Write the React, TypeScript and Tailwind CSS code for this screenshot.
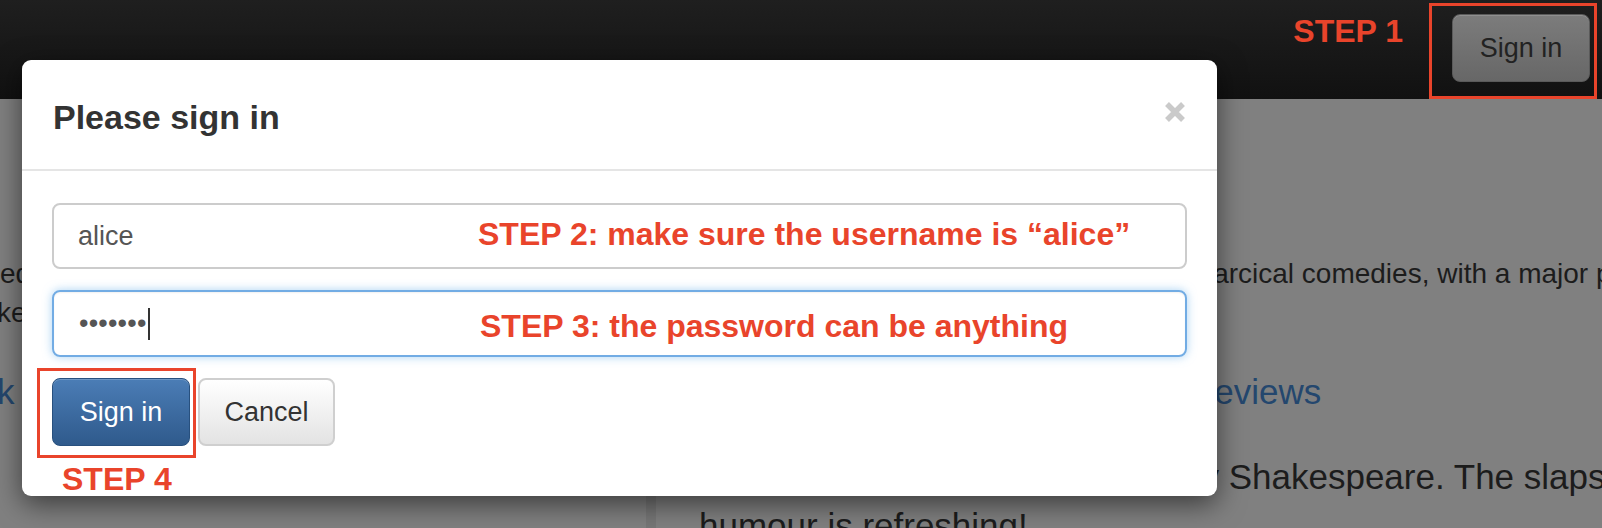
import React from "react";

const font = { fontFamily: '"Liberation Sans", Arial, Helvetica, sans-serif' };

function CloseIcon() {
  return (
    <svg width="22" height="22" viewBox="0 0 22 22" className="text-[#cacaca]">
      <path d="M3 3 L19 19 M19 3 L3 19" stroke="currentColor" strokeWidth="5.5" />
    </svg>
  );
}

function Navbar() {
  return (
    <div className="h-[99px] flex items-start justify-end pr-[5px] bg-gradient-to-b from-[#1f1f1f] to-[#111111]">
      <span className="mt-[15px] mr-[26px] text-[32px] leading-none font-bold text-[#e9442b]">
        STEP 1
      </span>
      <div className="mt-[3px] w-[168px] h-[96px] border-[3px] border-[#e9442b] pl-[20px] pt-[8px]">
        <button className="w-[138px] h-[68px] rounded-[8px] border border-[#5a5a5a] bg-gradient-to-b from-[#7c7c7c] to-[#676767] text-[27px] text-[#222] shadow-[inset_0_1px_0_rgba(255,255,255,0.15)]">
          Sign in
        </button>
      </div>
    </div>
  );
}

function PageBehind() {
  return (
    <div className="flex h-[429px] bg-[#808080] text-[#1c1c1c] overflow-hidden">
      {/* left column, mostly hidden by the modal */}
      <div className="w-[646px] shrink-0 overflow-hidden">
        <div className="pt-[155px] text-[28px] leading-[39px] whitespace-nowrap">
          <p>ed on the streets of Ephesus, a merchant is arrested</p>
          <p className="-ml-[3px]">ke for his long lost twin brother</p>
        </div>
        <h3 className="mt-[40px] -ml-[3px] text-[35px] leading-[40px] text-[#24476e] whitespace-nowrap">
          k tickets
        </h3>
      </div>
      {/* right column */}
      <div className="flex-1 min-w-0">
        <p className="pt-[155px] pl-[24px] text-[28px] leading-[39px] whitespace-nowrap">
          plays. It is his shortest and one of his most farcical comedies, with a major part of the humour
        </p>
        <h3 className="mt-[40px] pt-[39px] ml-[543px] text-[35px] leading-[40px] text-[#24476e] whitespace-nowrap">
          Reviews
        </h3>
        <blockquote className="mt-[40px] border-l-[10px] border-[#777777] pl-[43px] text-[35px] leading-[49px] whitespace-nowrap">
          <p className="indent-[18px]">One of the funniest comedies by Shakespeare. The slapstick</p>
          <p>humour is refreshing!</p>
        </blockquote>
      </div>
    </div>
  );
}

function SignInModal() {
  return (
    <div className="absolute left-[22px] top-[60px] w-[1195px] h-[436px] bg-white rounded-[9px] shadow-[0_8px_28px_rgba(0,0,0,0.55)]">
      <div className="h-[111px] border-b-2 border-[#e5e5e5] px-[31px] pt-[38px] flex items-start justify-between">
        <h4 className="text-[34px] leading-[39px] font-bold text-[#333]">Please sign in</h4>
        <div className="mt-[3px]">
          <CloseIcon />
        </div>
      </div>

      <div className="px-[30px] pt-[32px]">
        <div className="relative h-[66px] rounded-[8px] border-2 border-[#cccccc] flex items-center pl-[24px] text-[27px] text-[#555]">
          alice
          <span className="absolute left-[424px] top-[13px] text-[32px] leading-none font-bold text-[#e9442b] whitespace-nowrap">
            STEP 2: make sure the username is “alice”
          </span>
        </div>

        <div className="relative mt-[21px] h-[67px] rounded-[8px] border-2 border-[#72ace4] shadow-[0_0_10px_rgba(102,175,233,0.55),inset_0_1px_2px_rgba(0,0,0,0.06)] flex items-center pl-[25px] text-[27px] text-[#555]">
          <span className="tracking-[0.2px]">•••••••</span>
          <span className="ml-[1px] w-[2px] h-[32px] bg-[#333]" />
          <span className="absolute left-[426px] top-[18px] text-[32px] leading-none font-bold text-[#e9442b] whitespace-nowrap">
            STEP 3: the password can be anything
          </span>
        </div>

        <div className="mt-[21px] flex gap-[8px]">
          <div className="relative">
            <button className="w-[138px] h-[68px] rounded-[8px] border border-[#28507e] bg-gradient-to-b from-[#4b7db6] to-[#2f5a8c] text-[27px] text-white shadow-[inset_0_1px_0_rgba(255,255,255,0.2)]">
              Sign in
            </button>
            <div className="absolute -left-[15px] -top-[10px] w-[159px] h-[90px] border-[3px] border-[#e9442b]" />
            <span className="absolute left-[10px] top-[85px] text-[32px] leading-none font-bold text-[#e9442b] whitespace-nowrap">
              STEP 4
            </span>
          </div>
          <button className="w-[137px] h-[68px] rounded-[8px] border-2 border-[#cfcfcf] bg-gradient-to-b from-white to-[#e3e3e3] text-[27px] text-[#333]">
            Cancel
          </button>
        </div>
      </div>
    </div>
  );
}

export default function App() {
  return (
    <div className="relative w-[1602px] h-[528px] overflow-hidden" style={font}>
      <Navbar />
      <PageBehind />
      <SignInModal />
    </div>
  );
}
